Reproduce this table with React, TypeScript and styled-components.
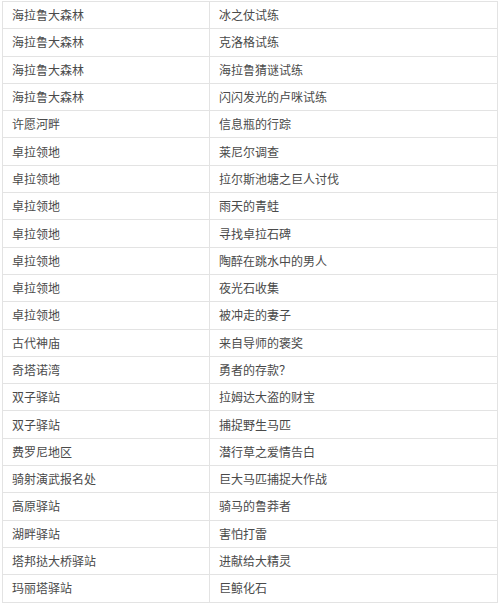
import { createGlobalStyle, styled } from 'styled-components';

const GlobalStyle = createGlobalStyle`
	html, body {
		margin: 0;
		padding: 0;
		background: #ffffff;
	}
	body {
		font-family: 'Noto Sans CJK SC', 'Liberation Sans', sans-serif;
	}
`;

const Page = styled.div`
	width: 500px;
	height: 605px;
	padding: 1px 3px 0 2px;
	box-sizing: border-box;
	overflow: hidden;
`;

const Table = styled.table`
	width: 495px;
	border-collapse: collapse;
	table-layout: fixed;
`;

const Col = styled.col<{ $wide?: boolean }>`
	width: ${({ $wide }) => ($wide ? '288px' : '207px')};
`;

const Cell = styled.td`
	height: 27.3px;
	padding: 0 0 0 9px;
	border: 1px solid #e3e3e3;
	font-size: 12px;
	line-height: 14px;
	color: #4a4a4a;
	white-space: nowrap;
	box-sizing: border-box;
	vertical-align: middle;
`;

const rows: [string, string][] = [
	['海拉鲁大森林', '冰之仗试练'],
	['海拉鲁大森林', '克洛格试练'],
	['海拉鲁大森林', '海拉鲁猜谜试练'],
	['海拉鲁大森林', '闪闪发光的卢咪试练'],
	['许愿河畔', '信息瓶的行踪'],
	['卓拉领地', '莱尼尔调查'],
	['卓拉领地', '拉尔斯池塘之巨人讨伐'],
	['卓拉领地', '雨天的青蛙'],
	['卓拉领地', '寻找卓拉石碑'],
	['卓拉领地', '陶醉在跳水中的男人'],
	['卓拉领地', '夜光石收集'],
	['卓拉领地', '被冲走的妻子'],
	['古代神庙', '来自导师的褒奖'],
	['奇塔诺湾', '勇者的存款？'],
	['双子驿站', '拉姆达大盗的财宝'],
	['双子驿站', '捕捉野生马匹'],
	['费罗尼地区', '潜行草之爱情告白'],
	['骑射演武报名处', '巨大马匹捕捉大作战'],
	['高原驿站', '骑马的鲁莽者'],
	['湖畔驿站', '害怕打雷'],
	['塔邦挞大桥驿站', '进献给大精灵'],
	['玛丽塔驿站', '巨鲸化石'],
];

export default function App() {
	return (
		<>
			<GlobalStyle />
			<Page>
				<Table>
					<colgroup>
						<Col />
						<Col $wide />
					</colgroup>
					<tbody>
						{rows.map(([place, quest], i) => (
							<tr key={i}>
								<Cell>{place}</Cell>
								<Cell>{quest}</Cell>
							</tr>
						))}
					</tbody>
				</Table>
			</Page>
		</>
	);
}
